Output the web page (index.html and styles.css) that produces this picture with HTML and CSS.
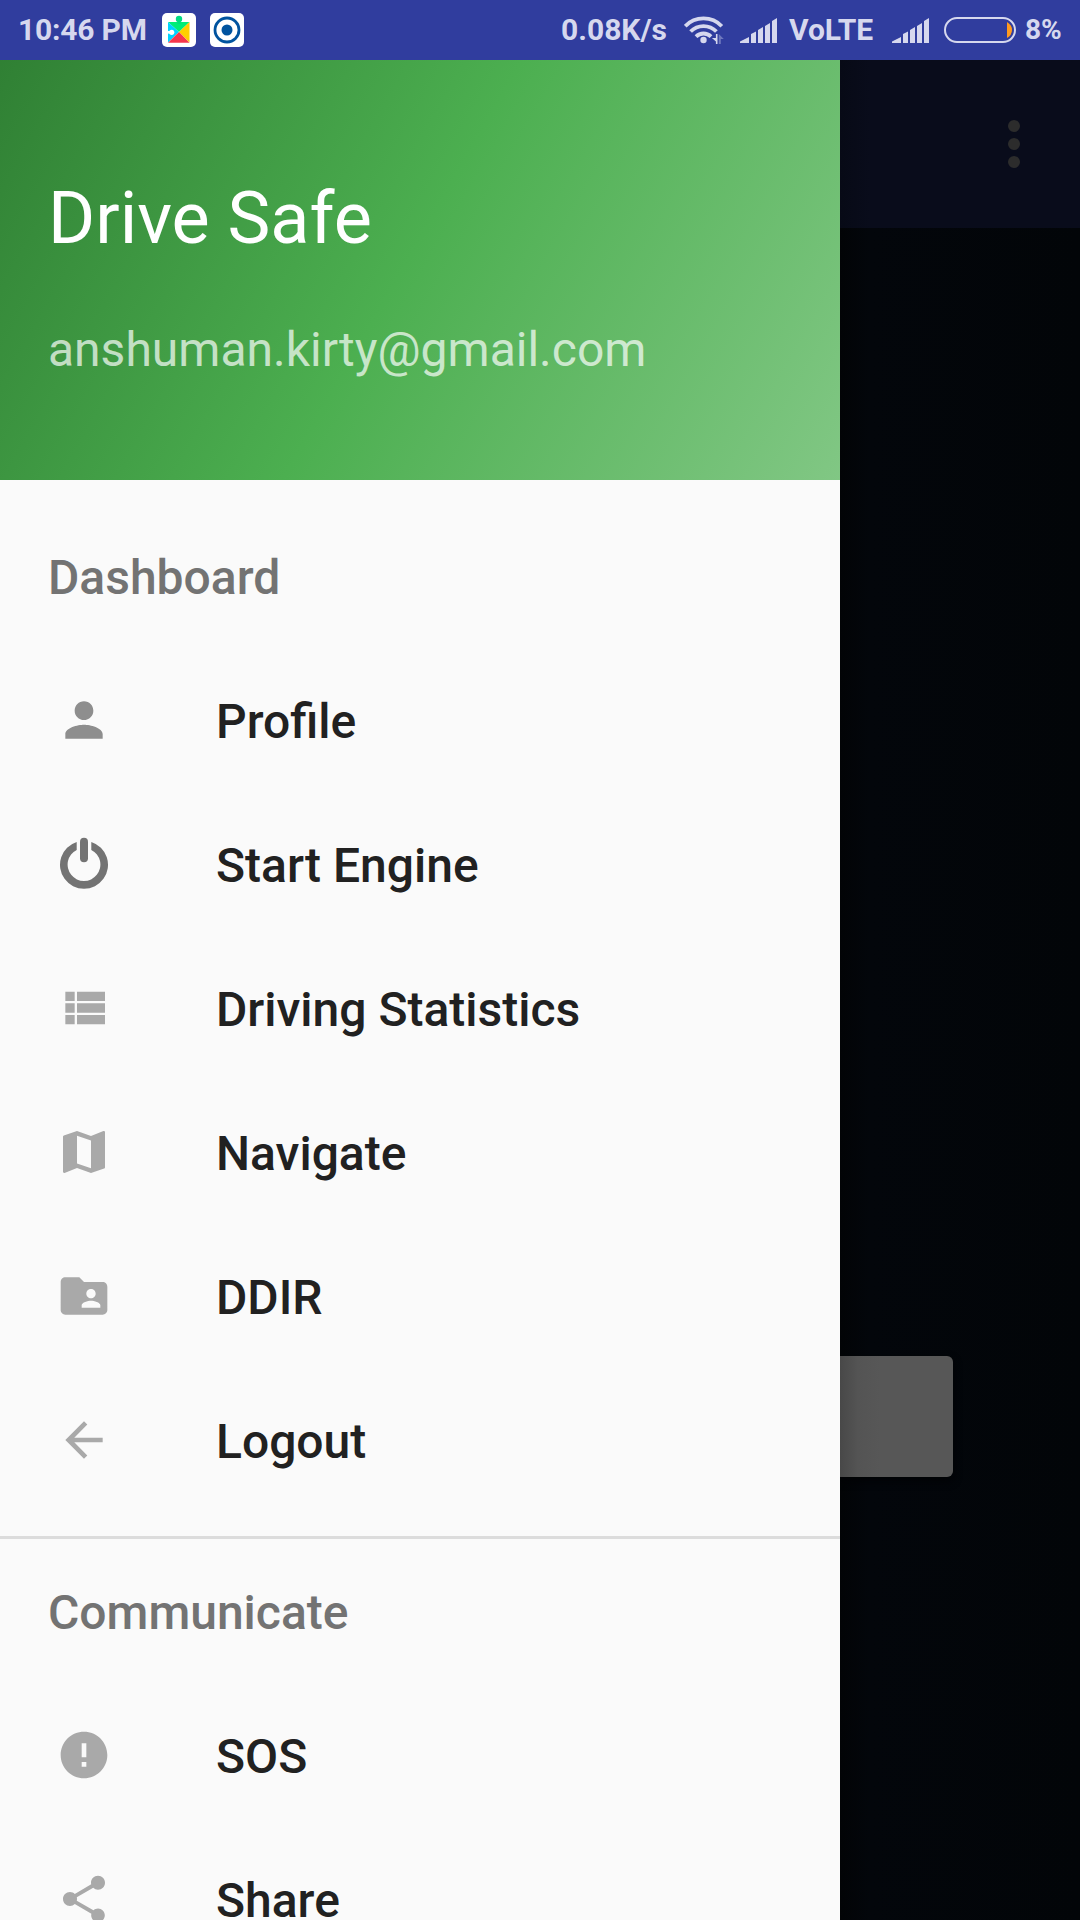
FILE: index.html
```html
<!DOCTYPE html>
<html lang="en">
<head>
<meta charset="utf-8">
<title>Drive Safe</title>
<link rel="stylesheet" href="styles.css">
</head>
<body>
<div class="screen">
  <header class="status">
    <div class="status-left">
      <span class="clock">10:46 PM</span>
      <svg class="app-badge" viewBox="0 0 34 34">
        <rect width="34" height="34" rx="5" fill="#fff"/>
        <path d="M6 9h21.500L17 19z" fill="#00ee76"/>
        <circle cx="17" cy="6" r="3.200" fill="#00d984"/>
        <path d="M15.500 6h3v5h-3z" fill="#00e07c"/>
        <path d="M27.500 9v20.500L17 19z" fill="#ffce00"/>
        <path d="M6 9v20.500L17 19z" fill="#00d2ff"/>
        <path d="M6 29.700h21.500L17 19z" fill="#f5364c"/>
        <circle cx="9.700" cy="19.300" r="2.600" fill="#fff"/>
        <path d="M5 18h4v2.600H5z" fill="#fff"/>
      </svg>
      <svg class="app-badge" viewBox="0 0 34 34">
        <rect width="34" height="34" rx="5" fill="#fff"/>
        <circle cx="17" cy="17" r="12" fill="none" stroke="#00539f" stroke-width="2.800"/>
        <circle cx="17" cy="17" r="5.500" fill="#00539f"/>
      </svg>
    </div>
    <div class="status-right">
      <span class="speed">0.08K/s</span>
      <svg class="wifi" viewBox="0 0 40 30">
        <g fill="none" stroke="#d6d8ee" stroke-width="3.800">
          <path d="M1.200 11.200a25.500 25.500 0 0 1 36.600 0"/>
          <path d="M6.600 16.500a18 18 0 0 1 25.800 0"/>
          <path d="M12 21.600a10.600 10.600 0 0 1 15 0"/>
        </g>
        <circle cx="19.500" cy="25" r="3.200" fill="#d6d8ee"/>
        <path d="M33.500 19v10h-1.600v-2.500l-4-3.500h4v-4z" fill="#d6d8ee"/>
        <path d="M34.800 19l5 5h-3v5h-2z" fill="#6f78bd"/>
      </svg>
      <svg class="signal" viewBox="0 0 37 25"><path d="M0 25v-1.500L9 19v6zM11 25v-9l5-2.500V25zM18 25V12l5-3v16zM25 25V8l5-3v20zM32 25V3l5-3v25z" fill="#d6d8ee"/></svg>
      <span class="volte">VoLTE</span>
      <svg class="signal signal-two" viewBox="0 0 37 25"><path d="M0 25v-1.500L9 19v6zM11 25v-9l5-2.500V25zM18 25V12l5-3v16zM25 25V8l5-3v20zM32 25V3l5-3v25z" fill="#d6d8ee"/></svg>
      <svg class="battery" viewBox="0 0 72 26">
        <rect x="1" y="1" width="70" height="24" rx="12" fill="none" stroke="#d6d8ee" stroke-width="2"/>
        <path d="M63 5q5 3 5 8t-5 8z" fill="#ff9a1f"/>
      </svg>
      <span class="percent">8%</span>
    </div>
  </header>

  <div class="body">
    <nav class="drawer">
      <div class="account">
        <div class="account-name">Drive Safe</div>
        <div class="account-mail">anshuman.kirty@gmail.com</div>
      </div>
      <div class="menu">
        <div class="subheader">Dashboard</div>
        <a class="item"><svg class="icon icon-mid" viewBox="0 0 24 24"><path d="M12 12c2.210 0 4-1.790 4-4s-1.790-4-4-4-4 1.790-4 4 1.790 4 4 4zm0 2c-2.670 0-8 1.340-8 4v2h16v-2c0-2.660-5.330-4-8-4z"/></svg><span>Profile</span></a>
        <a class="item"><svg class="icon icon-dark" viewBox="0 0 56 56"><path d="M20.700 5.900A24 24 0 1 0 35.300 5.900V13.900A16.400 16.400 0 1 1 20.700 13.900Z"/><rect x="24" y="1.700" width="8" height="24.600" rx="4"/></svg><span>Start Engine</span></a>
        <a class="item"><svg class="icon" viewBox="0 0 24 24"><path d="M4 14h4v-4H4v4zm0 5h4v-4H4v4zM4 9h4V5H4v4zm5 5h12v-4H9v4zm0 5h12v-4H9v4zM9 5v4h12V5H9z"/></svg><span>Driving Statistics</span></a>
        <a class="item"><svg class="icon" viewBox="0 0 24 24"><path d="M20.500 3l-.160.030L15 5.100 9 3 3.360 4.900c-.210.070-.360.250-.360.480V20.500c0 .280.220.500.500.500l.160-.030L9 18.900l6 2.100 5.640-1.900c.210-.070.360-.250.360-.480V3.500c0-.280-.220-.500-.500-.500zM15 19l-6-2.110V5l6 2.110V19z"/></svg><span>Navigate</span></a>
        <a class="item"><svg class="icon" viewBox="0 0 24 24"><path d="M20 6h-8l-2-2H4c-1.100 0-1.990.900-1.990 2L2 18c0 1.100.900 2 2 2h16c1.100 0 2-.900 2-2V8c0-1.100-.900-2-2-2zm-5 3c1.100 0 2 .900 2 2s-.900 2-2 2-2-.900-2-2 .900-2 2-2zm4 8h-8v-1c0-1.330 2.670-2 4-2s4 .670 4 2v1z"/></svg><span>DDIR</span></a>
        <a class="item"><svg class="icon" viewBox="0 0 24 24"><path d="M20 11H7.830l5.590-5.590L12 4l-8 8 8 8 1.410-1.410L7.830 13H20v-2z"/></svg><span>Logout</span></a>
        <div class="divider"></div>
        <div class="subheader">Communicate</div>
        <a class="item"><svg class="icon" viewBox="0 0 24 24"><path d="M12 2C6.480 2 2 6.480 2 12s4.480 10 10 10 10-4.480 10-10S17.520 2 12 2zm1 15h-2v-2h2v2zm0-4h-2V7h2v6z"/></svg><span>SOS</span></a>
        <a class="item"><svg class="icon" viewBox="0 0 24 24"><path d="M18 16.080c-.760 0-1.440.300-1.960.770L8.910 12.700c.050-.230.090-.460.090-.700s-.040-.470-.090-.700l7.050-4.110c.540.500 1.250.810 2.040.810 1.660 0 3-1.340 3-3s-1.340-3-3-3-3 1.340-3 3c0 .240.040.470.090.700L8.040 9.810C7.500 9.310 6.790 9 6 9c-1.660 0-3 1.340-3 3s1.340 3 3 3c.790 0 1.500-.310 2.040-.810l7.120 4.160c-.050.210-.080.430-.080.650 0 1.610 1.310 2.920 2.920 2.920s2.920-1.310 2.920-2.920-1.310-2.920-2.920-2.920z"/></svg><span>Share</span></a>
      </div>
    </nav>
    <main class="page">
      <div class="toolbar">
        <svg class="more" viewBox="0 0 12 48"><g fill="#2c2c2c"><circle cx="6" cy="6" r="6"/><circle cx="6" cy="24" r="6"/><circle cx="6" cy="42" r="6"/></g></svg>
      </div>
      <div class="content"><div class="button"></div></div>
    </main>
  </div>
</div>
</body>
</html>
```
FILE: styles.css
```css
* { box-sizing: border-box; }
body { margin: 0; font-family: Roboto, "Noto Sans", sans-serif; }
.screen { display: flex; flex-direction: column; width: 1080px; height: 1920px; overflow: hidden; background: #020508; }

.status { display: flex; justify-content: space-between; height: 60px; flex: none; background: #303d9e; color: #d6d8ee; font-size: 30px; font-weight: 700; line-height: 60px; white-space: nowrap; }
.status svg { display: block; flex: none; }
.status span { flex: none; }
.status-left, .status-right { display: flex; align-items: center; }
.status-left { padding-left: 18px; gap: 14px; }
.clock { width: 130px; letter-spacing: -.2px; }
.app-badge { width: 34px; height: 34px; }
.speed { width: 123px; }
.wifi { width: 40px; height: 30px; margin-right: 16px; }
.signal { width: 37px; height: 25px; margin-right: 12px; }
.volte { width: 103px; }
.signal-two { margin-right: 15px; }
.battery { width: 72px; height: 26px; margin-right: 9px; }
.percent { width: 55px; font-size: 28px; }

.body { display: flex; flex: 1; min-height: 0; }
.drawer { width: 840px; flex: none; overflow: hidden; background: #fafafa; }
.account { display: flex; flex-direction: column; height: 420px; padding: 117px 48px 0; background: linear-gradient(119.74deg, #2e7d32, #4caf50 50%, #81c784) 0 -60px / 840px 480px no-repeat; color: #fff; }
.account-name { font-size: 72px; line-height: 84px; }
.account-mail { margin-top: 61px; font-size: 48px; line-height: 56px; color: rgba(255, 255, 255, .7); }

.menu { padding-top: 24px; font-size: 48px; font-weight: 500; }
.subheader { height: 144px; padding-left: 48px; line-height: 148px; color: #737373; }
.item { display: flex; align-items: center; height: 144px; padding-left: 56px; gap: 104px; color: #212121; }
.item span { padding-top: 4px; line-height: 56px; }
.icon { width: 56px; height: 56px; flex: none; fill: #a9a9a9; }
.icon-mid { fill: #8e8e8e; }
.icon-dark { fill: #737373; }
.divider { height: 3px; margin-top: 24px; background: #dcdcdc; }

.page { display: flex; flex-direction: column; flex: 1; overflow: hidden; }
.toolbar { display: flex; align-items: center; justify-content: flex-end; height: 168px; padding-right: 60px; background: linear-gradient(90deg, #070a16, #090c1b 30px); }
.more { width: 12px; height: 48px; }
.content { flex: 1; padding-top: 1128px; background: linear-gradient(90deg, #020406, #03060b 30px, #020508); }
.button { width: 113px; height: 121px; border-radius: 0 6px 6px 0; background: linear-gradient(90deg, #484848, #545454 18px, #575757 40px); box-shadow: 0 4px 8px #020305; }
```
